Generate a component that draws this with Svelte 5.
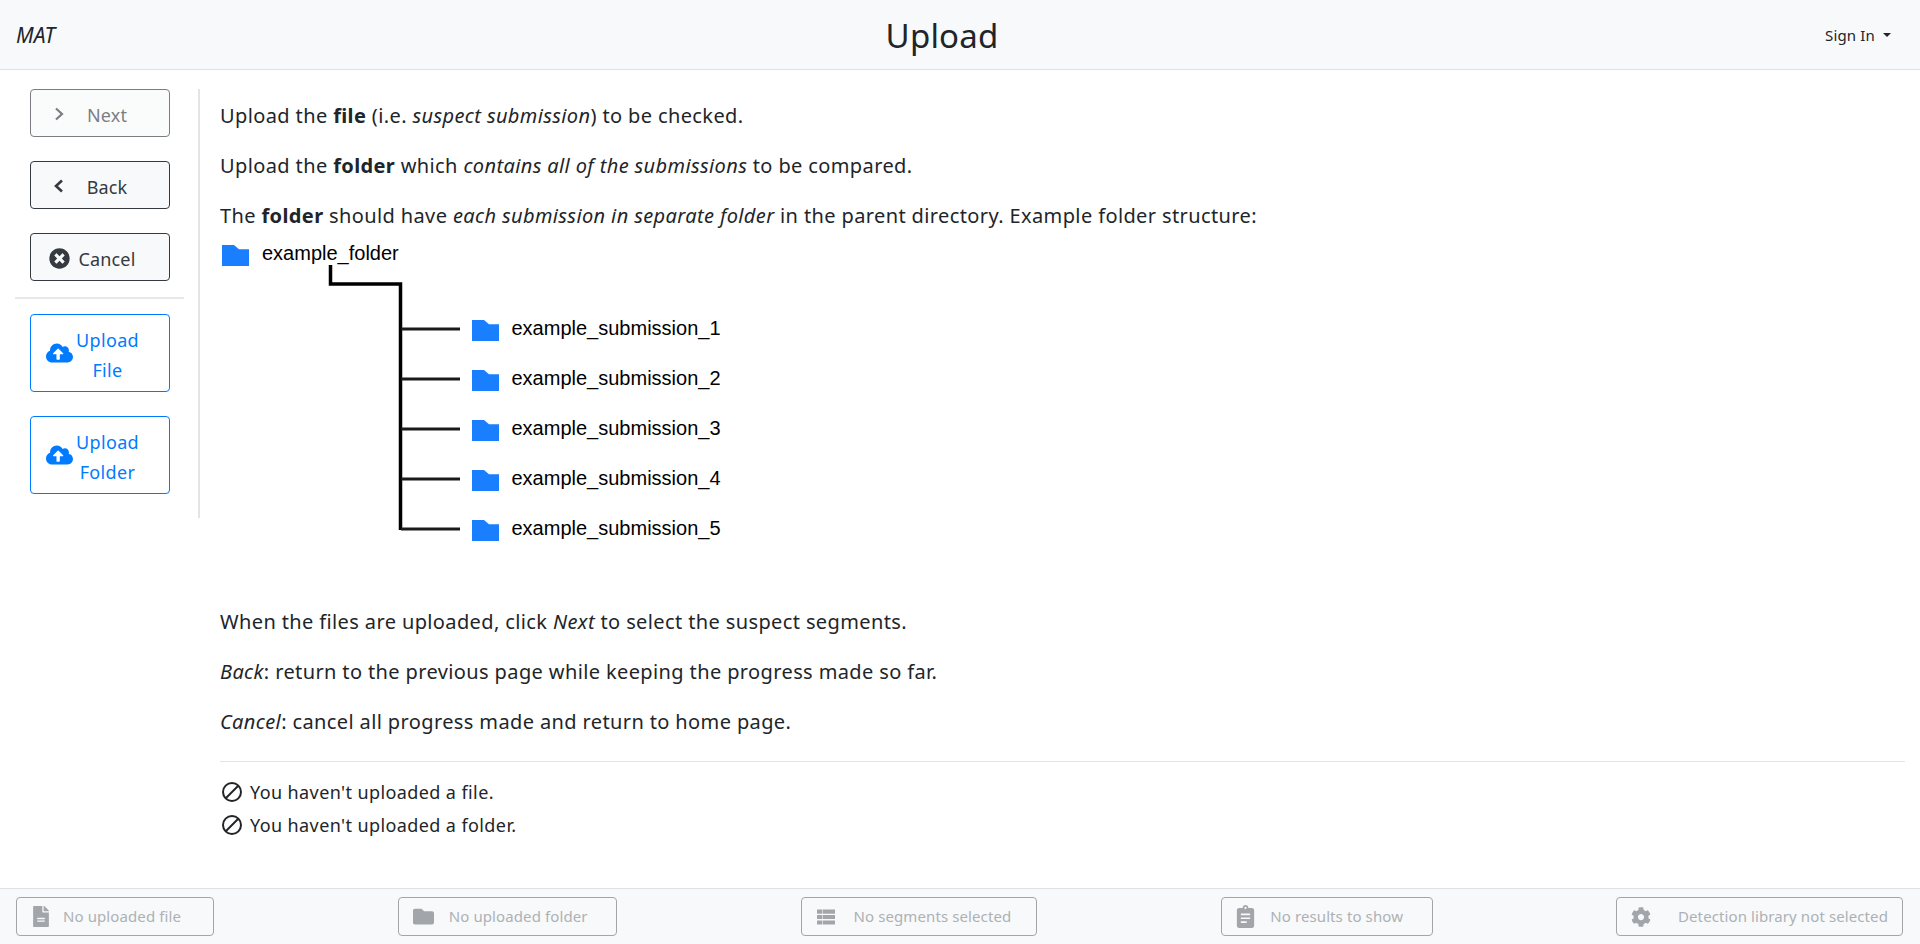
<script>
const branches = [1, 2, 3, 4, 5];
const foot = [
  { cls: 'file', text: 'No uploaded file' },
  { cls: 'folder', text: 'No uploaded folder' },
  { cls: 'seg', text: 'No segments selected' },
  { cls: 'res', text: 'No results to show' },
  { cls: 'lib', text: 'Detection library not selected' }
];
const cloud = 'M537.6 226.6c4.1-10.7 6.4-22.4 6.4-34.6 0-53-43-96-96-96-19.7 0-38.1 6-53.3 16.2C367 64.2 315.3 32 256 32c-88.4 0-160 71.6-160 160 0 2.7.1 5.4.2 8.1C40.2 219.8 0 273.2 0 336c0 79.5 64.5 144 144 144h368c70.7 0 128-57.3 128-128 0-61.9-44-113.6-102.4-125.4zM393.4 288H328v112c0 8.8-7.2 16-16 16h-48c-8.8 0-16-7.2-16-16V288h-65.4c-14.3 0-21.4-17.2-11.3-27.3l105.4-105.4c6.2-6.2 16.4-6.2 22.6 0l105.4 105.4c10.1 10.1 2.9 27.3-11.3 27.3z';
const folderPath = 'M464 128H272l-64-64H48C21.49 64 0 85.49 0 112v288c0 26.51 21.49 48 48 48h416c26.51 0 48-21.49 48-48V176c0-26.51-21.49-48-48-48z';
</script>

<div class="page">
  <header class="nav">
    <i class="brand">MAT</i>
    <h1 class="title">Upload</h1>
    <span class="sign">Sign In <span class="caret"></span></span>
  </header>

  <div class="body">
    <aside class="side">
      <button class="btn dis">
        <span class="ic shift"><svg width="10" height="14" viewBox="0 0 10 14"><polyline points="2,1.500 8,7 2,12.500" fill="none" stroke="currentColor" stroke-width="2.200"/></svg></span>
        <span class="lb">Next</span>
      </button>
      <button class="btn dark">
        <span class="ic shift"><svg width="10" height="14" viewBox="0 0 10 14"><polyline points="8,1.500 2,7 8,12.500" fill="none" stroke="currentColor" stroke-width="2.600"/></svg></span>
        <span class="lb">Back</span>
      </button>
      <button class="btn dark">
        <span class="ic shift"><svg width="21" height="21" viewBox="0 0 512 512"><path fill="currentColor" d="M256 8C119 8 8 119 8 256s111 248 248 248 248-111 248-248S393 8 256 8zm121.6 313.1c4.7 4.7 4.7 12.3 0 17L338 377.6c-4.7 4.7-12.3 4.7-17 0L256 312l-65.1 65.6c-4.7 4.7-12.3 4.7-17 0L134.4 338c-4.7-4.7-4.7-12.3 0-17l65.6-65-65.6-65.1c-4.7-4.7-4.7-12.3 0-17l39.6-39.6c4.7-4.7 12.3-4.7 17 0l65 65.7 65.1-65.6c4.7-4.7 12.3-4.7 17 0l39.6 39.6c4.7 4.7 4.7 12.3 0 17L312 256l65.6 65.1z"/></svg></span>
        <span class="lb">Cancel</span>
      </button>
      <hr class="side-hr" />
      <button class="btn up">
        <span class="ic"><svg width="27" height="22" viewBox="0 0 640 512"><path fill="currentColor" d={cloud}/></svg></span>
        <span class="lb wide">Upload File</span>
      </button>
      <button class="btn up">
        <span class="ic"><svg width="27" height="22" viewBox="0 0 640 512"><path fill="currentColor" d={cloud}/></svg></span>
        <span class="lb wide">Upload Folder</span>
      </button>
    </aside>

    <main class="content">
      <p>Upload the <b>file</b> (i.e. <i>suspect submission</i>) to be checked.</p>
      <p>Upload the <b>folder</b> which <i>contains all of the submissions</i> to be compared.</p>
      <p class="tight">The <b>folder</b> should have <i>each submission in separate folder</i> in the parent directory. Example folder structure:</p>

      <svg class="tree" width="600" height="376" viewBox="220 231 600 376">
        <path class="fd" d="M222 245h12l5 4.300h10v16.700h-27z"/>
        <text class="tt" x="262" y="260">example_folder</text>
        <path class="ln" d="M330.500 265V284H400.500V530"/>
        {#each branches as n, i}
          <path class="br" d={`M401 ${329 + i * 50}H460`}/>
          <path class="fd" d={`M472 ${320 + i * 50}h12l5 4.300h10v16.700h-27z`}/>
          <text class="tt" x="511.500" y={335 + i * 50}>example_submission_{n}</text>
        {/each}
      </svg>

      <p>When the files are uploaded, click <i>Next</i> to select the suspect segments.</p>
      <p><i>Back</i>: return to the previous page while keeping the progress made so far.</p>
      <p><i>Cancel</i>: cancel all progress made and return to home page.</p>
      <hr class="main-hr" />
      <div class="st"><svg width="20" height="20" viewBox="0 0 20 20"><circle cx="10" cy="10" r="9" fill="none" stroke="currentColor" stroke-width="2"/><line x1="4" y1="16" x2="16" y2="4" stroke="currentColor" stroke-width="2"/></svg><span>You haven't uploaded a file.</span></div>
      <div class="st"><svg width="20" height="20" viewBox="0 0 20 20"><circle cx="10" cy="10" r="9" fill="none" stroke="currentColor" stroke-width="2"/><line x1="4" y1="16" x2="16" y2="4" stroke="currentColor" stroke-width="2"/></svg><span>You haven't uploaded a folder.</span></div>
    </main>
  </div>

  <footer class="foot">
    {#each foot as f}
      <div class="fb {f.cls}">
        <span class="fi">
          {#if f.cls === 'file'}
            <svg width="16" height="21" viewBox="0 0 384 512"><path fill="currentColor" d="M224 136V0H24C10.700 0 0 10.700 0 24v464c0 13.300 10.700 24 24 24h336c13.300 0 24-10.700 24-24V160H248c-13.200 0-24-10.800-24-24zm64 236c0 6.600-5.400 12-12 12H108c-6.600 0-12-5.400-12-12v-8c0-6.600 5.400-12 12-12h168c6.600 0 12 5.400 12 12v8zm0-64c0 6.600-5.400 12-12 12H108c-6.600 0-12-5.400-12-12v-8c0-6.600 5.400-12 12-12h168c6.600 0 12 5.400 12 12v8zm96-186.100v6.100H256V0h6.100c6.400 0 12.500 2.500 17 7l97.900 98c4.500 4.500 7 10.600 7 16.900z"/></svg>
          {:else if f.cls === 'folder'}
            <svg width="21" height="21" viewBox="0 0 512 512"><path fill="currentColor" d={folderPath}/></svg>
          {:else if f.cls === 'seg'}
            <svg width="18" height="18" viewBox="0 0 512 512"><path fill="currentColor" d="M0 40h150v120H0zM0 196h150v120H0zM0 352h150v120H0zM166 40h346v120H166zM166 196h346v120H166zM166 352h346v120H166z"/></svg>
          {:else if f.cls === 'res'}
            <svg width="19" height="23" viewBox="0 0 384 512"><path fill="currentColor" fill-rule="evenodd" d="M336 64h-80c0-35.300-28.700-64-64-64s-64 28.700-64 64H48C21.500 64 0 85.500 0 112v352c0 26.500 21.500 48 48 48h288c26.500 0 48-21.500 48-48V112c0-26.500-21.500-48-48-48zM192 40c13.300 0 24 10.700 24 24s-10.700 24-24 24-24-10.700-24-24 10.700-24 24-24zM88 190h208v36H88zM88 276h208v36H88zM88 362h130v36H88z"/></svg>
          {:else}
            <svg width="20" height="20" viewBox="0 0 512 512"><path fill="currentColor" d="M487.400 315.700l-42.600-24.600c4.300-23.200 4.300-47 0-70.200l42.600-24.600c4.900-2.800 7.100-8.600 5.500-14-11.100-35.600-30-67.800-54.700-94.600-3.800-4.100-10-5.100-14.800-2.300L380.800 110c-17.900-15.400-38.500-27.300-60.800-35.100V25.800c0-5.600-3.900-10.500-9.400-11.700-36.700-8.200-74.300-7.800-109.200 0-5.500 1.200-9.400 6.100-9.400 11.700V75c-22.200 7.900-42.800 19.800-60.800 35.100L88.700 85.500c-4.900-2.800-11-1.900-14.800 2.300-24.700 26.700-43.600 58.900-54.700 94.600-1.700 5.400.6 11.200 5.500 14L67.300 221c-4.300 23.200-4.300 47 0 70.200l-42.600 24.600c-4.900 2.800-7.100 8.600-5.500 14 11.100 35.600 30 67.800 54.700 94.600 3.800 4.100 10 5.100 14.800 2.300l42.600-24.600c17.900 15.400 38.500 27.300 60.800 35.100v49.200c0 5.600 3.900 10.500 9.400 11.700 36.700 8.200 74.300 7.800 109.200 0 5.500-1.200 9.400-6.100 9.400-11.700v-49.200c22.200-7.900 42.800-19.800 60.800-35.100l42.600 24.600c4.900 2.800 11 1.900 14.800-2.300 24.700-26.700 43.600-58.900 54.700-94.600 1.500-5.500-.7-11.300-5.600-14.100zM256 336c-44.100 0-80-35.900-80-80s35.900-80 80-80 80 35.900 80 80-35.900 80-80 80z"/></svg>
          {/if}
        </span>
        <span class="ft">{f.text}</span>
      </div>
    {/each}
  </footer>
</div>

<style>
  :global(body) { margin: 0; background: #fff; }
  .page {
    height: 944px;
    display: flex;
    flex-direction: column;
    font-family: "Noto Sans", "Open Sans", sans-serif;
    font-size: 20px;
    line-height: 30px;
    letter-spacing: 0.38px;
    color: #212529;
    overflow: hidden;
  }
  .nav {
    height: 69px;
    flex: none;
    background: #f8f9fa;
    border-bottom: 1px solid #dfe0e1;
    display: flex;
    align-items: center;
    justify-content: space-between;
    padding: 0 29px 0 16px;
  }
  .brand { font-size: 21px; letter-spacing: 0; }
  .title {
    margin: 2px 0 0 4px;
    font-size: 33px;
    font-weight: 400;
    line-height: 40px;
    letter-spacing: 0.2px;
  }
  .sign { font-size: 15px; letter-spacing: 0.15px; display: flex; align-items: center; gap: 8px; }
  .caret {
    width: 0;
    height: 0;
    border-top: 4px solid #212529;
    border-left: 4px solid transparent;
    border-right: 4px solid transparent;
    margin-top: 1px;
  }
  .body { flex: 1; display: flex; min-height: 0; }
  .side {
    width: 200px;
    box-sizing: border-box;
    flex: none;
    align-self: flex-start;
    margin-top: 19px;
    padding: 0 15px 24px;
    border-right: 2px solid #e3e4e5;
    display: flex;
    flex-direction: column;
    align-items: flex-start;
  }
  .btn {
    width: 140px;
    margin: 0 0 24px 15px;
    box-sizing: border-box;
    display: flex;
    align-items: center;
    padding: 8px 26px 8px 16px;
    font: inherit;
    font-size: 18px;
    letter-spacing: 0.15px;
    border-radius: 4px;
    border: 1px solid #343a40;
    background: #f8f9fa;
    color: #343a40;
  }
  .btn.dis { opacity: 0.65; }
  .btn.dark { color: #343a40; }
  .btn.up { background: #fff; border-color: #007bff; color: #007bff; }
  .ic { width: 24px; flex: none; display: flex; justify-content: center; align-items: center; }
  .ic.shift { margin-top: 2px; }
  .ic svg { flex: none; }
  .lb { flex: 1; text-align: center; position: relative; top: 2px; }
  .lb.wide { letter-spacing: 0.35px; padding-left: 1px; }
  .side-hr {
    align-self: stretch;
    margin: -8px 0 15px;
    border: none;
    border-top: 2px solid #e7e8e9;
    width: 169px;
  }
  .side > .btn:last-child { margin-bottom: 0; }
  .content { flex: 1; min-width: 0; padding: 31px 15px 0 20px; }
  p { margin: 0 0 20px; }
  p.tight { margin-bottom: 0; }
  .tree { display: block; }
  .fd { fill: #1a7fff; }
  .tt { font-family: "Liberation Sans", Arial, sans-serif; font-size: 20px; fill: #000; letter-spacing: 0; }
  .ln { fill: none; stroke: #000; stroke-width: 3.500; }
  .br { fill: none; stroke: #1a1a1a; stroke-width: 3; }
  .main-hr { margin: 24px 0 13px; border: none; border-top: 1px solid #e3e4e5; }
  .st { display: flex; align-items: center; gap: 8px; height: 33px; padding-left: 2px; font-size: 18px; letter-spacing: 0.4px; color: #212529; }
  .foot {
    height: 56px;
    flex: none;
    box-sizing: border-box;
    background: #f8f9fa;
    border-top: 1px solid #dfe0e1;
    padding: 8px 17px 8px 16px;
    display: flex;
    justify-content: space-between;
    align-items: center;
  }
  .fb {
    height: 39px;
    box-sizing: border-box;
    border: 1px solid #a3a6a9;
    border-radius: 4px;
    display: flex;
    align-items: center;
    color: #a2a6ab;
    font-size: 15px;
    letter-spacing: 0.1px;
  }
  .fi { display: flex; align-items: center; flex: none; }
  .ft { color: #adb1b5; white-space: nowrap; margin-top: -2px; }
  .file { width: 198px; padding-left: 16px; gap: 14px; }
  .folder { width: 219px; padding-left: 14px; gap: 15px; }
  .seg { width: 236px; padding-left: 15px; gap: 19px; }
  .res { width: 212px; padding-left: 14px; gap: 15px; margin: 0 -1px 0 1px; }
  .lib { width: 287px; padding-left: 14px; gap: 27px; }
</style>
